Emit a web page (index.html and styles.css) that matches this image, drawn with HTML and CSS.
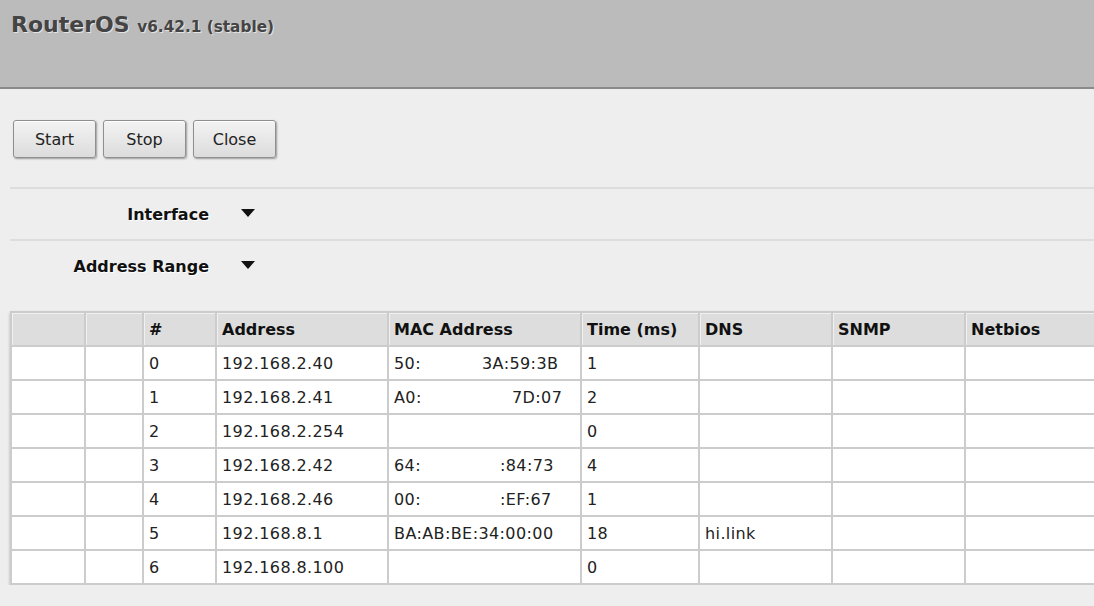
FILE: index.html
```html
<!DOCTYPE html>
<html lang="en">
<head>
<meta charset="utf-8">
<title>RouterOS - IP Scan</title>
<link rel="stylesheet" href="styles.css">
</head>
<body>
<header class="top-bar">
  <h1 class="brand">RouterOS <span class="version">v6.42.1 (stable)</span></h1>
</header>

<main class="content">
  <div class="toolbar">
    <button class="btn" type="button">Start</button>
    <button class="btn" type="button">Stop</button>
    <button class="btn" type="button">Close</button>
  </div>

  <div class="form">
    <div class="form-row">
      <label class="form-label">Interface</label>
      <span class="dropdown-toggle"></span>
    </div>
    <div class="form-row">
      <label class="form-label">Address Range</label>
      <span class="dropdown-toggle"></span>
    </div>
  </div>

  <table class="scan-table">
    <colgroup>
      <col class="c-flag"><col class="c-flag2"><col class="c-num"><col class="c-addr"><col class="c-mac"><col class="c-time"><col class="c-dns"><col class="c-snmp"><col class="c-netbios">
    </colgroup>
    <thead>
      <tr><th></th><th></th><th>#</th><th>Address</th><th>MAC Address</th><th>Time (ms)</th><th>DNS</th><th>SNMP</th><th>Netbios</th></tr>
    </thead>
    <tbody>
      <tr><td></td><td></td><td>0</td><td>192.168.2.40</td><td class="mac"><span>50:</span><span>3A:59:3B</span></td><td>1</td><td></td><td></td><td></td></tr>
      <tr><td></td><td></td><td>1</td><td>192.168.2.41</td><td class="mac"><span>A0:</span><span>7D:07</span></td><td>2</td><td></td><td></td><td></td></tr>
      <tr><td></td><td></td><td>2</td><td>192.168.2.254</td><td></td><td>0</td><td></td><td></td><td></td></tr>
      <tr><td></td><td></td><td>3</td><td>192.168.2.42</td><td class="mac"><span>64:</span><span>:84:73</span></td><td>4</td><td></td><td></td><td></td></tr>
      <tr><td></td><td></td><td>4</td><td>192.168.2.46</td><td class="mac"><span>00:</span><span>:EF:67</span></td><td>1</td><td></td><td></td><td></td></tr>
      <tr><td></td><td></td><td>5</td><td>192.168.8.1</td><td>BA:AB:BE:34:00:00</td><td>18</td><td>hi.link</td><td></td><td></td></tr>
      <tr><td></td><td></td><td>6</td><td>192.168.8.100</td><td></td><td>0</td><td></td><td></td><td></td></tr>
    </tbody>
  </table>
</main>
</body>
</html>
```

FILE: styles.css
```css
html {
  overflow: hidden;
}

body {
  margin: 0;
  background: #eeeeee;
  font-family: Verdana, "DejaVu Sans", sans-serif;
  font-size: 16px;
  color: #222;
}

/* Title bar */
.top-bar {
  height: 87px;
  background: #bbbbbb;
  border-bottom: 2px solid #8a8a8a;
  box-sizing: content-box;
}

.brand {
  margin: 0;
  padding: 11px 0 0 11px;
  font-size: 22px;
  font-weight: bold;
  color: #444;
  text-shadow: 1px 1px 0 #e4e4e4;
  line-height: 28px;
}

.version {
  font-size: 15.3px;
}

.content {
  padding: 31px 0 0 10px;
}

/* Buttons */
.toolbar {
  display: flex;
  gap: 7px;
  padding-left: 3px;
  margin-bottom: 29px;
}

.btn {
  width: 83px;
  height: 38px;
  font-family: inherit;
  font-size: 16px;
  color: #222;
  background: linear-gradient(#f3f3f3, #dcdcdc);
  border: 1px solid #8f8f8f;
  border-radius: 3px;
  box-shadow: 1px 1px 2px rgba(0, 0, 0, 0.35), inset 0 1px 0 #fff;
  padding: 0;
}

/* Form rows */
.form {
  border-top: 2px solid #dddddd;
}

.form-row {
  display: flex;
  align-items: center;
  height: 50px;
  border-bottom: 2px solid #dddddd;
}

.form-row:last-child {
  border-bottom: none;
  height: 50px;
}

.form-label {
  width: 199px;
  text-align: right;
  font-weight: bold;
  color: #111;
  text-shadow: 1px 1px 0 #fff;
}

.dropdown-toggle {
  margin-left: 32px;
  width: 0;
  height: 0;
  border-left: 7px solid transparent;
  border-right: 7px solid transparent;
  border-top: 8px solid #111;
  margin-top: -2px;
}

/* Results table */
.scan-table {
  margin-top: 20px;
  border-collapse: collapse;
  table-layout: fixed;
  width: 1089px;
  background: #fff;
  box-shadow: 0 2px 3px rgba(0, 0, 0, 0.25);
}

.c-flag { width: 74px; }
.c-flag2 { width: 58px; }
.c-num { width: 73px; }
.c-addr { width: 172px; }
.c-mac { width: 193px; }
.c-time { width: 118px; }
.c-dns { width: 133px; }
.c-snmp { width: 133px; }
.c-netbios { width: 135px; }

.scan-table th,
.scan-table td {
  border: 2px solid #cccccc;
  padding: 0 5px;
  text-align: left;
  white-space: nowrap;
  overflow: hidden;
}

.scan-table th {
  height: 32px;
  background: #dddddd;
  box-shadow: inset 1px 1px 0 #f0f0f0;
  font-weight: bold;
  color: #111;
}

.scan-table td {
  height: 32px;
  color: #222;
  letter-spacing: 0.4px;
}

.scan-table td.mac span:first-child {
  display: inline-block;
  width: 88px;
}

.scan-table tbody tr:nth-child(2) td.mac span:first-child {
  width: 118px;
}

.scan-table tbody tr:nth-child(4) td.mac span:first-child,
.scan-table tbody tr:nth-child(5) td.mac span:first-child {
  width: 106px;
}
```
